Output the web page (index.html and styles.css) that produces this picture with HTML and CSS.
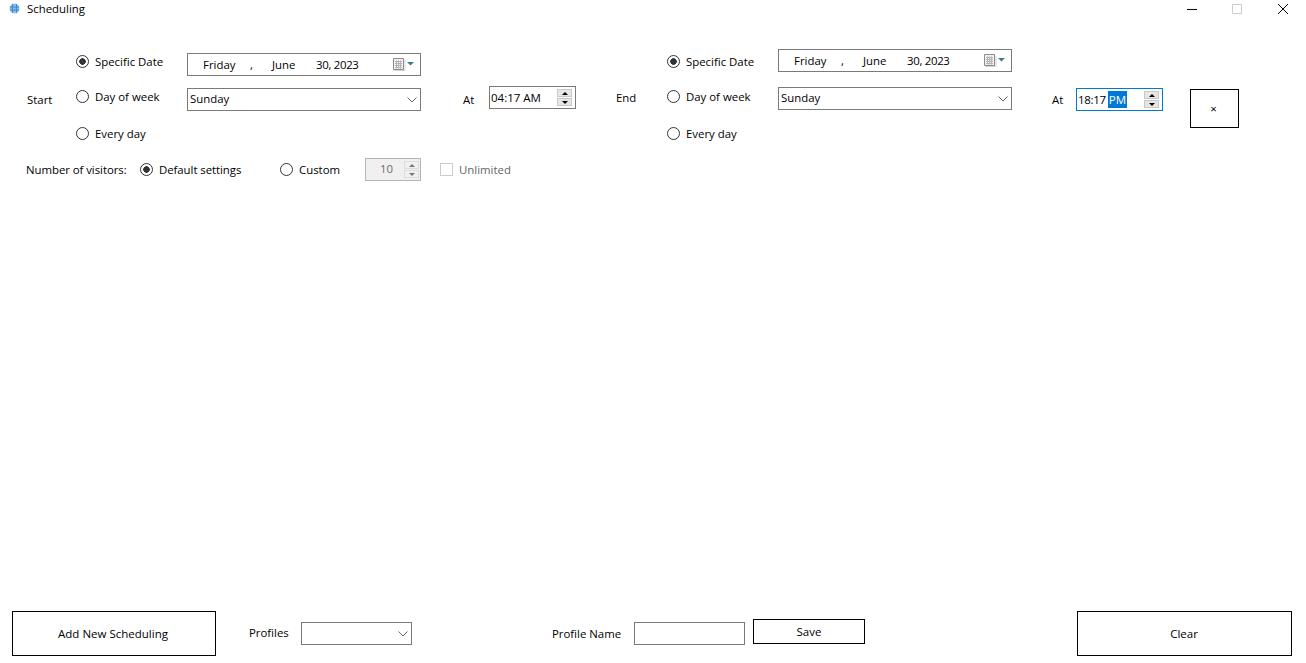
FILE: index.html
```html
<!DOCTYPE html>
<html lang="en">
<head>
    <meta charset="UTF-8">
    <meta name="viewport" content="width=device-width, initial-scale=1.0">
    <title>Scheduling</title>
    <link rel="stylesheet" href="styles.css">
</head>
<body>

<div class="window">
    <div class="titlebar">
        <svg class="app-icon" viewBox="0 0 11 11" width="11" height="11">
            <circle cx="5.500" cy="5.500" r="5" fill="#8fbcee"/>
            <path d="M3.500 1v9M7.500 1v9M1 4h9M1 7h9" stroke="#3d86d8" stroke-width="1" fill="none"/>
        </svg>
        <span class="app-title">Scheduling</span>
        <div class="win-controls">
            <svg viewBox="0 0 10 10" width="10" height="10"><path d="M0 5.500h10" stroke="#000" fill="none"/></svg>
            <svg viewBox="0 0 10 10" width="10" height="10"><path d="M.5.500h9v9h-9z" stroke="#ccc" fill="none"/></svg>
            <svg class="win-close" viewBox="0 0 10 10" width="10" height="10"><path d="M0 0l10 10M10 0L0 10" stroke="#000" fill="none"/></svg>
        </div>
    </div>

    <div class="main">
        <div class="schedule">
            <div class="side-label start-label">Start</div>
            <div class="radio-list start-radios">
                <label class="option"><input type="radio" name="start" checked>Specific Date</label>
                <label class="option"><input type="radio" name="start">Day of week</label>
                <label class="option"><input type="radio" name="start">Every day</label>
            </div>
            <div class="controls start-controls">
                <div class="field date-field">
                    <span class="d-day">Friday</span><span class="d-comma">,</span><span class="d-month">June</span><span class="d-rest">30, 2023</span>
                    <svg class="cal-icon" viewBox="0 0 21 13" width="21" height="13">
                        <path d="M.5.500h10v11h-10z" fill="#f2f2f2" stroke="#8a8a8a"/>
                        <path d="M2 3.500h7M2 5.500h7M2 7.500h7M2 9.500h7M3.500 2.500v8M5.500 2.500v8M7.500 2.500v8" stroke="#b4b4b4" fill="none"/>
                        <path d="M1.500 12.500h10.500V2" stroke="#d4d4d4" fill="none"/>
                        <path d="M14 4h7l-3.500 3.500z" fill="#3b7a8c"/>
                    </svg>
                </div>
                <div class="field select-field">
                    <span>Sunday</span>
                    <svg class="chevron" viewBox="0 0 10 6" width="10" height="6"><path d="M.5.500L5 5 9.500.500" stroke="#666" fill="none"/></svg>
                </div>
            </div>
            <div class="at-label start-at">At</div>
            <div class="field time-field start-time">
                <span>04:17 AM</span>
                <div class="spin"><i class="spin-up"></i><i class="spin-down"></i></div>
            </div>

            <div class="side-label end-label">End</div>
            <div class="radio-list end-radios">
                <label class="option"><input type="radio" name="end" checked>Specific Date</label>
                <label class="option"><input type="radio" name="end">Day of week</label>
                <label class="option"><input type="radio" name="end">Every day</label>
            </div>
            <div class="controls end-controls">
                <div class="field date-field">
                    <span class="d-day">Friday</span><span class="d-comma">,</span><span class="d-month">June</span><span class="d-rest">30, 2023</span>
                    <svg class="cal-icon" viewBox="0 0 21 13" width="21" height="13">
                        <path d="M.5.500h10v11h-10z" fill="#f2f2f2" stroke="#8a8a8a"/>
                        <path d="M2 3.500h7M2 5.500h7M2 7.500h7M2 9.500h7M3.500 2.500v8M5.500 2.500v8M7.500 2.500v8" stroke="#b4b4b4" fill="none"/>
                        <path d="M1.500 12.500h10.500V2" stroke="#d4d4d4" fill="none"/>
                        <path d="M14 4h7l-3.500 3.500z" fill="#3b7a8c"/>
                    </svg>
                </div>
                <div class="field select-field">
                    <span>Sunday</span>
                    <svg class="chevron" viewBox="0 0 10 6" width="10" height="6"><path d="M.5.500L5 5 9.500.500" stroke="#666" fill="none"/></svg>
                </div>
            </div>
            <div class="at-label end-at">At</div>
            <div class="field time-field end-time focused">
                <span class="time-value">18:17</span><span class="selected">PM</span>
                <div class="spin"><i class="spin-up"></i><i class="spin-down"></i></div>
            </div>
            <button class="btn remove-btn">×</button>
        </div>

        <div class="visitors">
            <div class="visitors-label">Number of visitors:</div>
            <label class="option default-opt"><input type="radio" name="visitors" checked>Default settings</label>
            <label class="option custom-opt"><input type="radio" name="visitors">Custom</label>
            <div class="field count-field">
                <span>10</span>
                <div class="spin"><i class="spin-up"></i><i class="spin-down"></i></div>
            </div>
            <label class="option unlimited"><input type="checkbox" disabled>Unlimited</label>
        </div>
    </div>

    <div class="footer">
        <button class="btn add-btn">Add New Scheduling</button>
        <span class="profiles-label">Profiles</span>
        <div class="field select-field profiles-select">
            <svg class="chevron" viewBox="0 0 10 6" width="10" height="6"><path d="M.5.500L5 5 9.500.500" stroke="#666" fill="none"/></svg>
        </div>
        <span class="name-label">Profile Name</span>
        <input class="name-input" type="text">
        <button class="btn save-btn">Save</button>
        <button class="btn clear-btn">Clear</button>
    </div>
</div>

</body>
</html>
```

FILE: styles.css
```css
body {
    margin: 0;
    background-color: #fff;
    color: #000;
    font-family: 'Open Sans', 'Noto Sans', sans-serif;
    font-size: 11.4px;
    line-height: 17px;
}
.window {
    display: flex;
    flex-direction: column;
    height: 100vh;
    overflow: hidden;
}
.titlebar {
    display: flex;
    align-items: center;
    height: 17px;
    padding: 0 18px 0 9px;
}
.app-icon {
    margin-right: 7px;
}
.win-controls {
    display: flex;
    gap: 35px;
    margin-left: auto;
}
.win-close {
    margin-left: 1px;
}
.main {
    flex: 1;
}
.schedule {
    display: flex;
    align-items: flex-start;
    height: 109px;
    margin-top: 32px;
    padding-left: 27px;
}
.side-label {
    flex: none;
}
.start-label {
    width: 49px;
    margin-top: 42px;
}
.end-label {
    width: 51px;
    margin-top: 40px;
    margin-left: 40px;
}
.radio-list {
    display: grid;
    flex: none;
    width: 111px;
    margin-top: 4px;
    grid-template-rows: 35px 37px 17px;
}
.option {
    display: flex;
    align-items: center;
    height: 17px;
}
.option input {
    appearance: none;
    width: 13px;
    height: 13px;
    margin: 0 6px 0 0;
    border: 1px solid #333;
    background-color: #fff;
}
.option input[type="radio"] {
    border-radius: 50%;
}
.option input:checked {
    background: radial-gradient(circle, #333 0, #333 3px, #fff 3.500px);
}
.option input:disabled {
    border-color: #ccc;
}
.controls {
    display: flex;
    flex: none;
    flex-direction: column;
    width: 234px;
}
.start-controls {
    gap: 12px;
    margin-top: 4px;
}
.end-controls {
    gap: 15px;
}
.field {
    display: flex;
    align-items: center;
    box-sizing: border-box;
    height: 23px;
    border: 1px solid #7a7a7a;
    background-color: #fff;
}
.date-field span {
    flex: none;
}
.d-day {
    width: 47px;
    margin-left: 15px;
}
.d-comma {
    width: 22px;
}
.d-month {
    width: 44px;
}
.d-rest {
    letter-spacing: -0.3px;
}
.cal-icon {
    margin-left: auto;
    margin-right: 6px;
}
.select-field {
    padding-left: 2px;
}
.select-field span {
    padding-bottom: 2px;
}
.chevron {
    margin-left: auto;
    margin-right: 3px;
}
.at-label {
    flex: none;
    margin-top: 42px;
}
.start-at {
    width: 26px;
    margin-left: 42px;
}
.end-at {
    width: 24px;
    margin-left: 40px;
}
.time-field {
    flex: none;
    width: 87px;
    padding-left: 1px;
    font-size: 11.5px;
}
.start-time {
    margin-top: 37px;
}
.end-time {
    margin-top: 39px;
}
.focused {
    border-color: #0078d7;
}
.time-value {
    letter-spacing: -0.3px;
}
.selected {
    margin-left: 2px;
    padding: 0 1px;
    background-color: #0078d7;
    color: #fff;
}
.spin {
    display: flex;
    flex-direction: column;
    gap: 1px;
    margin-left: auto;
    margin-right: 3px;
}
.spin i {
    display: flex;
    align-items: center;
    justify-content: center;
    box-sizing: border-box;
    width: 15px;
    height: 8px;
    border: 1px solid #c8c8c8;
    background-color: #e6e6e6;
}
.spin i::after {
    content: "";
    border-left: 3.500px solid transparent;
    border-right: 3.500px solid transparent;
}
.spin-up::after {
    border-bottom: 3px solid #000;
}
.spin-down::after {
    border-top: 3px solid #000;
}
.btn {
    flex: none;
    padding: 0;
    border: 1px solid #000;
    background-color: #fff;
    color: #000;
    font: inherit;
    font-size: 11.5px;
}
.remove-btn {
    width: 49px;
    height: 39px;
    margin-top: 40px;
    margin-left: 27px;
    padding-right: 2px;
}
.visitors {
    display: flex;
    align-items: center;
    height: 23px;
    padding-left: 26px;
}
.visitors-label {
    flex: none;
    width: 114px;
    letter-spacing: -0.05px;
}
.default-opt {
    width: 140px;
    letter-spacing: -0.05px;
}
.custom-opt {
    width: 85px;
}
.count-field {
    flex: none;
    width: 56px;
    padding-left: 14px;
    border-color: #b5b5b5;
    background-color: #f0f0f0;
    color: #6d6d6d;
}
.count-field > span {
    padding-bottom: 3px;
}
.count-field .spin {
    margin-right: 1px;
}
.count-field .spin i {
    border-color: #ddd;
    background-color: #f0f0f0;
}
.count-field .spin-up::after {
    border-bottom-color: #777;
}
.count-field .spin-down::after {
    border-top-color: #777;
}
.unlimited {
    margin-left: 19px;
    color: #666;
}
.footer {
    display: flex;
    flex: none;
    align-items: center;
    padding: 0 14px 7px 12px;
}
.add-btn {
    width: 204px;
    height: 45px;
    padding-right: 2px;
}
.profiles-label {
    width: 52px;
    margin-bottom: 2px;
    margin-left: 33px;
}
.profiles-select {
    flex: none;
    width: 111px;
}
.name-label {
    width: 82px;
    margin-left: 140px;
}
.name-input {
    box-sizing: border-box;
    width: 111px;
    height: 23px;
    padding: 0 2px;
    border: 1px solid #7a7a7a;
    outline: none;
}
.save-btn {
    width: 112px;
    height: 25px;
    margin-bottom: 4px;
    margin-left: 8px;
}
.clear-btn {
    width: 215px;
    height: 45px;
    margin-left: auto;
    padding-right: 1px;
}
```
